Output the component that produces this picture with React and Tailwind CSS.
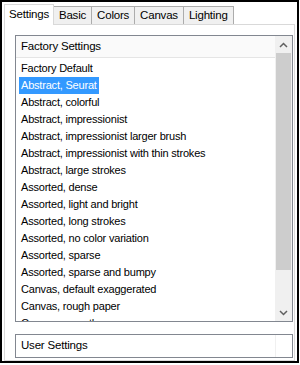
import React from "react";

const tabs = ["Settings", "Basic", "Colors", "Canvas", "Lighting"];

const presets = [
  "Factory Default",
  "Abstract, Seurat",
  "Abstract, colorful",
  "Abstract, impressionist",
  "Abstract, impressionist larger brush",
  "Abstract, impressionist with thin strokes",
  "Abstract, large strokes",
  "Assorted, dense",
  "Assorted, light and bright",
  "Assorted, long strokes",
  "Assorted, no color variation",
  "Assorted, sparse",
  "Assorted, sparse and bumpy",
  "Canvas, default exaggerated",
  "Canvas, rough paper",
  "Canvas, smooth",
];

const App = () => {
  const selected = 1;

  return (
    <div
      className="w-[300px] h-[365px] bg-white text-[11px] tracking-[-0.2px] text-black"
      style={{ fontFamily: '"Liberation Sans", Arial, sans-serif' }}
    >
      <div className="w-[299px] h-[363px] border-2 border-black flex flex-col pt-[2px] px-[2px]">
        {/* Tabs */}
        <div className="flex items-end h-[22px]">
          {tabs.map((t, i) =>
            i === 0 ? (
              <div
                key={t}
                className="h-[21px] px-[4px] flex items-center bg-white border border-b-0 border-[#d9d9d9] -mb-[1px] relative z-10 text-[11.5px]"
              >
                {t}
              </div>
            ) : (
              <div
                key={t}
                className="h-[18px] px-[5px] flex items-center bg-[#f0f0f0] border border-l-0 border-b-0 border-[#acacac] text-[11.5px]"
              >
                {t}
              </div>
            )
          )}
        </div>

        {/* Tab panel */}
        <div className="flex-1 border border-[#d9d9d9] bg-white pt-[10px] pl-[10px] pr-[1px] pb-[2px] flex flex-col">
          {/* List box */}
          <div className="h-[287px] border border-[#828790] flex">
            <div className="flex-1 flex flex-col overflow-hidden">
              <div className="h-[22px] shrink-0 bg-[#fafafa] border-b border-[#e5e5e5] flex items-center pl-[5px] text-[11.5px]">
                Factory Settings
              </div>
              <div className="pt-[2px] pl-[3px] overflow-hidden">
                {presets.map((p, i) => (
                  <div key={p} className="h-[17px] flex items-center">
                    <span
                      className={
                        i === selected
                          ? "bg-[#3399ff] text-white px-[2px] h-[17px] flex items-center"
                          : "px-[2px]"
                      }
                    >
                      {p}
                    </span>
                  </div>
                ))}
              </div>
            </div>

            {/* Scrollbar */}
            <div className="w-[17px] bg-[#f0f0f0] flex flex-col">
              <div className="h-[17px] flex items-center justify-center">
                <svg width="9" height="6" viewBox="0 0 9 6">
                  <path d="M1 5 L4.5 1.5 L8 5" fill="none" stroke="#606060" strokeWidth="1.5" />
                </svg>
              </div>
              <div className="px-[1px]">
                <div className="h-[217px] bg-[#cdcdcd]" />
              </div>
              <div className="flex-1" />
              <div className="h-[17px] flex items-center justify-center">
                <svg width="9" height="6" viewBox="0 0 9 6">
                  <path d="M1 1 L4.5 4.5 L8 1" fill="none" stroke="#606060" strokeWidth="1.5" />
                </svg>
              </div>
            </div>
          </div>

          {/* User settings */}
          <div className="mt-[12px] h-[24px] border border-[#828790] flex">
            <div className="flex-1 flex items-center pl-[5px] text-[11.5px]">User Settings</div>
            <div className="w-[17px] border-l border-[#f0f0f0]" />
          </div>
        </div>
      </div>
    </div>
  );
};

export default App;
